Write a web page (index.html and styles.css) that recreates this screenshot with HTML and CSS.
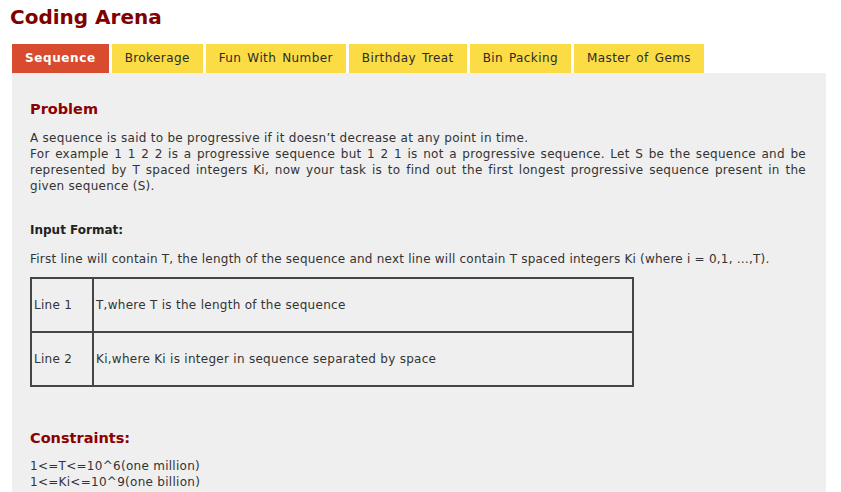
FILE: index.html
```html
<!DOCTYPE html>
<html>
<head>
<meta charset="utf-8">
<title>Coding Arena</title>
<link rel="stylesheet" href="styles.css">
</head>
<body>
<div class="page">
  <h1 class="title">Coding Arena</h1>
  <ul class="tabs">
    <li class="tab active">Sequence</li>
    <li class="tab">Brokerage</li>
    <li class="tab">Fun With Number</li>
    <li class="tab">Birthday Treat</li>
    <li class="tab">Bin Packing</li>
    <li class="tab">Master of Gems</li>
  </ul>
  <div class="panel">
    <h2 class="heading">Problem</h2>
    <p class="text">A sequence is said to be progressive if it doesn’t decrease at any point in time.<br>For example 1 1 2 2 is a progressive sequence but 1 2 1 is not a progressive sequence. Let S be the sequence and be represented by T spaced integers Ki, now your task is to find out the first longest progressive sequence present in the given sequence (S).</p>
    <h3 class="subheading">Input Format:</h3>
    <p class="text line">First line will contain T, the length of the sequence and next line will contain T spaced integers Ki (where i = 0,1, …,T).</p>
    <table class="format">
      <tr><td class="key">Line 1</td><td>T,where T is the length of the sequence</td></tr>
      <tr><td class="key">Line 2</td><td>Ki,where Ki is integer in sequence separated by space</td></tr>
    </table>
    <h2 class="heading constraints">Constraints:</h2>
    <p class="text limits">1&lt;=T&lt;=10^6(one million)<br>1&lt;=Ki&lt;=10^9(one billion)</p>
  </div>
</div>
</body>
</html>
```
FILE: styles.css
```css
html, body {
  margin: 0;
  padding: 0;
  background: #ffffff;
}
body {
  font-family: "DejaVu Sans", Verdana, sans-serif;
  color: #333333;
}
.page {
  padding: 5px 15px 0 12px;
}
.title {
  margin: 0 0 15px -2px;
  font-size: 20px;
  line-height: 24px;
  font-weight: bold;
  color: #800000;
}
.tabs {
  list-style: none;
  margin: 0;
  padding: 0;
  display: flex;
  gap: 3px;
}
.tab {
  height: 29px;
  line-height: 29px;
  padding: 0 13px 0 13px;
  font-size: 12px;
  letter-spacing: 0.4px;
  word-spacing: 1.8px;
  background: #fbdc45;
  color: #2b2b2b;
}
.tab.active {
  background: #d84b2f;
  color: #ffffff;
  font-weight: bold;
  letter-spacing: 0.6px;
}
.panel {
  background: #efefef;
  padding: 26px 20px 20px 18px;
  min-height: 400px;
}
.heading {
  margin: 0;
  font-size: 14.5px;
  line-height: 20px;
  font-weight: bold;
  color: #8b0000;
}
.text {
  margin: 11px 0 0 0;
  font-size: 12px;
  line-height: 16px;
  letter-spacing: 0.28px;
  text-align: justify;
}
.subheading {
  margin: 28px 0 0 0;
  font-size: 12px;
  line-height: 16px;
  font-weight: bold;
  color: #222222;
}
.text.line {
  margin-top: 13px;
  letter-spacing: 0.22px;
}
.format {
  margin-top: 10px;
  width: 604px;
  border-collapse: collapse;
  font-size: 12px;
  letter-spacing: 0.28px;
  color: #333333;
}
.format td {
  border: 2px solid #454545;
  height: 52px;
  padding: 0 2px;
  vertical-align: middle;
}
.format td.key {
  width: 56px;
}
.constraints {
  margin-top: 41px;
}
.text.limits {
  margin-top: 10px;
}
```
